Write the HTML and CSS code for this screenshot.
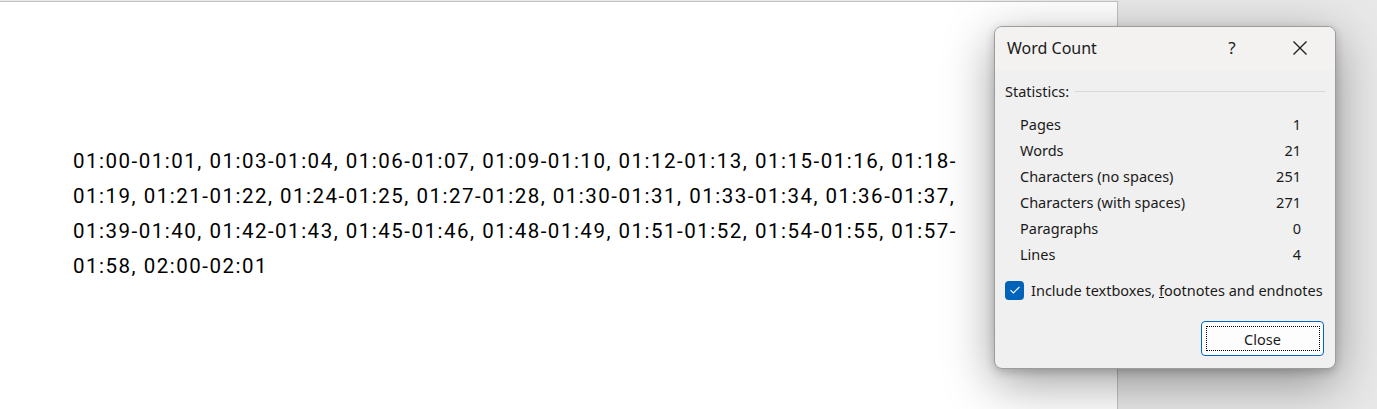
FILE: index.html
```html
<!DOCTYPE html>
<html lang="en">
<head>
<meta charset="utf-8">
<title>Word Count</title>
<link rel="stylesheet" href="styles.css">
</head>
<body>
<div class="workspace">
  <div class="page">
    <p class="doc-text">01:00-01:01, 01:03-01:04, 01:06-01:07, 01:09-01:10, 01:12-01:13, 01:15-01:16, 01:18-<br>01:19, 01:21-01:22, 01:24-01:25, 01:27-01:28, 01:30-01:31, 01:33-01:34, 01:36-01:37,<br>01:39-01:40, 01:42-01:43, 01:45-01:46, 01:48-01:49, 01:51-01:52, 01:54-01:55, 01:57-<br>01:58, 02:00-02:01</p>
  </div>
  <div class="canvas"></div>

  <div class="dialog" role="dialog" aria-label="Word Count">
    <div class="titlebar">
      <span class="title">Word Count</span>
      <span class="help">?</span>
      <span class="close-x">
        <svg width="16" height="16" viewBox="0 0 16 16"><path d="M1.5 1.5 L14.5 14.5 M14.5 1.5 L1.5 14.5" stroke="#1a1a1a" stroke-width="1.3" fill="none"/></svg>
      </span>
    </div>
    <div class="body">
      <div class="group-head">
        <span>Statistics:</span>
        <span class="rule"></span>
      </div>
      <div class="stats">
        <div class="row"><span>Pages</span><span>1</span></div>
        <div class="row"><span>Words</span><span>21</span></div>
        <div class="row"><span>Characters (no spaces)</span><span>251</span></div>
        <div class="row"><span>Characters (with spaces)</span><span>271</span></div>
        <div class="row"><span>Paragraphs</span><span>0</span></div>
        <div class="row"><span>Lines</span><span>4</span></div>
      </div>
      <label class="check">
        <span class="box">
          <svg width="12" height="10" viewBox="0 0 12 10"><path d="M1.5 5.2 L4.4 8 L10.5 1.8" stroke="#fff" stroke-width="1.1" fill="none"/></svg>
        </span>
        <span>Include textboxes, <u>f</u>ootnotes and endnotes</span>
      </label>
      <div class="actions">
        <button class="btn">Close</button>
      </div>
    </div>
  </div>
</div>
</body>
</html>
```

FILE: styles.css
```css
html, body {
  margin: 0;
  padding: 0;
  width: 1377px;
  height: 409px;
  overflow: hidden;
}

.workspace {
  position: relative;
  display: flex;
  width: 1377px;
  height: 409px;
  background: #e8e8e8;
}

.page {
  width: 1118px;
  height: 408px;
  margin-top: 1px;
  background: #ffffff;
  border-top: 1px solid #c2c2c2;
  border-right: 1px solid #c2c2c2;
  box-sizing: border-box;
  padding: 142px 0 0 73px;
}

.doc-text {
  margin: 0;
  font-family: Roboto, "Liberation Sans", sans-serif;
  font-size: 20.5px;
  line-height: 35px;
  letter-spacing: 1.5px;
  color: #000;
  white-space: nowrap;
}

.canvas {
  flex: 1;
}

.dialog {
  position: absolute;
  left: 994px;
  top: 26px;
  width: 342px;
  height: 343px;
  box-sizing: border-box;
  border: 1px solid #9c9c9c;
  border-radius: 8px;
  background: #f0f0f0;
  box-shadow: 0 14px 50px rgba(0, 0, 0, 0.38), 0 3px 10px rgba(0, 0, 0, 0.2);
  font-family: "Noto Sans", "Open Sans", sans-serif;
  color: #1a1a1a;
  overflow: hidden;
  display: flex;
  flex-direction: column;
}

.titlebar {
  height: 43px;
  background: #f3f2f1;
  display: flex;
  align-items: center;
  padding: 0 0 2px 12px;
  box-sizing: border-box;
}

.title {
  flex: 1;
  font-size: 16px;
  color: #1a1a1a;
}

.help {
  font-size: 17px;
  width: 20px;
  text-align: center;
  margin-right: 50px;
  color: #222;
}

.close-x {
  width: 16px;
  height: 16px;
  margin-right: 27px;
  display: flex;
}

.body {
  flex: 1;
  display: flex;
  flex-direction: column;
  padding: 10px 10px 12px 10px;
  font-size: 14.5px;
}

.group-head {
  display: flex;
  align-items: center;
  gap: 6px;
  height: 22px;
}

.group-head .rule {
  flex: 1;
  height: 1px;
  background: #d9d9d9;
}

.stats {
  padding: 9px 24px 0 15px;
  display: flex;
  flex-direction: column;
}

.row {
  display: flex;
  justify-content: space-between;
  height: 26px;
  line-height: 26px;
}

.check {
  display: flex;
  align-items: center;
  gap: 7px;
  margin-top: 12px;
  height: 22px;
}

.box {
  width: 19px;
  height: 19px;
  border-radius: 4px;
  background: #0063b9;
  display: flex;
  align-items: center;
  justify-content: center;
}

.actions {
  margin-top: auto;
  display: flex;
  justify-content: flex-end;
  padding-right: 1px;
}

.btn {
  position: relative;
  width: 123px;
  height: 35px;
  border: 1px solid #0067c0;
  border-radius: 4px;
  background: #fdfdfd;
  font-family: "Noto Sans", "Open Sans", sans-serif;
  font-size: 14.5px;
  color: #1a1a1a;
  padding: 0;
}

.btn::after {
  content: "";
  position: absolute;
  left: 4px;
  top: 4px;
  right: 3px;
  bottom: 4px;
  border: 1px dotted #000;
}
```
